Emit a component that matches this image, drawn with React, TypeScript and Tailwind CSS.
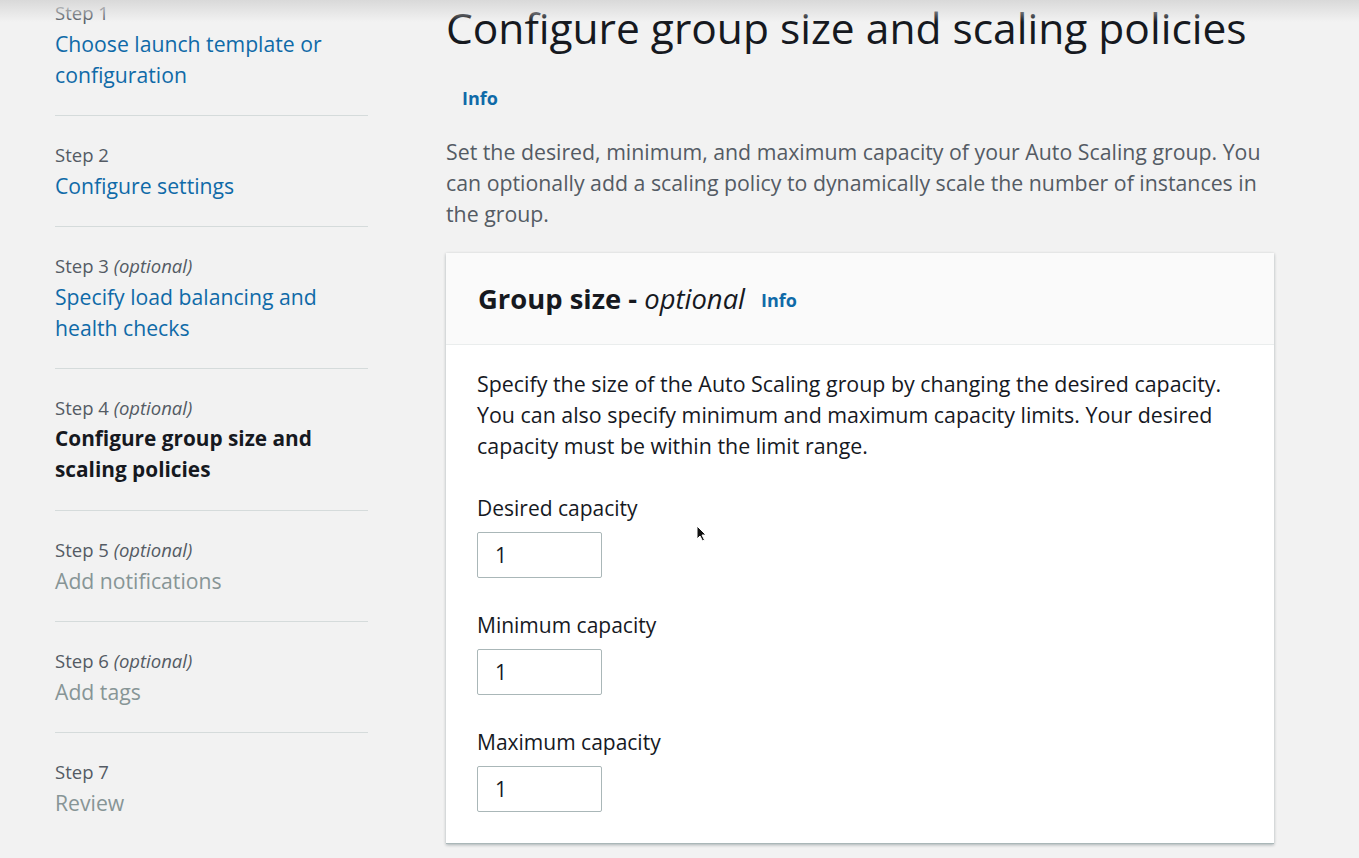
import React from "react";

const font = { fontFamily: '"Open Sans", "Noto Sans", Arial, sans-serif' };

type Step = { n: number; optional?: boolean; title: string; state: "link" | "current" | "disabled" };

const steps: Step[] = [
  { n: 1, title: "Choose launch template or configuration", state: "link" },
  { n: 2, title: "Configure settings", state: "link" },
  { n: 3, optional: true, title: "Specify load balancing and health checks", state: "link" },
  { n: 4, optional: true, title: "Configure group size and scaling policies", state: "current" },
  { n: 5, optional: true, title: "Add notifications", state: "disabled" },
  { n: 6, optional: true, title: "Add tags", state: "disabled" },
  { n: 7, title: "Review", state: "disabled" },
];

function Field({ label }: { label: string }) {
  return (
    <div className="flex flex-col">
      <label className="text-[21px] leading-[30px] text-[#16191f]">{label}</label>
      <input
        defaultValue="1"
        className="mt-[9px] h-[46px] w-[125px] rounded-[2px] border border-[#aab7b8] bg-white px-[17px] text-[21px] text-[#16191f] outline-none"
      />
    </div>
  );
}

export default function App() {
  return (
    <div
      className="relative h-[858px] w-[1359px] overflow-hidden bg-[#f2f2f2] text-[#16191f]"
      style={font}
    >
      <div className="pointer-events-none absolute inset-x-0 top-0 h-[22px] bg-gradient-to-b from-[#d9d9d9] to-transparent" />

      <div className="flex">
        {/* wizard navigation */}
        <nav className="ml-[55px] w-[313px] shrink-0">
          {steps.map((s, i) => (
            <div
              key={s.n}
              className={
                i === 0
                  ? "border-b border-[#d5dbdb] pb-[25px]"
                  : i === steps.length - 1
                  ? "pt-[26px]"
                  : "border-b border-[#d5dbdb] pb-[25px] pt-[26px]"
              }
            >
              <div className="text-[18.5px] leading-[26px] text-[#545b64]">
                Step {s.n}
                {s.optional && <i> (optional)</i>}
              </div>
              <div
                className={
                  s.state === "link"
                    ? "mt-[2px] text-[21.2px] leading-[31px] text-[#0f6aa8]"
                    : s.state === "current"
                    ? "mt-[2px] text-[20.8px] font-bold leading-[31px] text-[#16191f]"
                    : "mt-[2px] text-[21.2px] leading-[31px] text-[#879596]"
                }
              >
                {s.title}
              </div>
            </div>
          ))}
        </nav>

        {/* main content */}
        <main className="ml-[78px] w-[828px] shrink-0">
          <h1 className="mt-[2px] text-[42.5px] leading-[52px] text-[#16191f]">
            Configure group size and scaling policies
          </h1>
          <div className="mt-[31px] pl-[16px] text-[18px] font-bold leading-[26px] text-[#0f6aa8]">Info</div>
          <p className="mt-[25px] text-[21.3px] leading-[31px] text-[#545b64]">
            Set the desired, minimum, and maximum capacity of your Auto Scaling group. You can optionally add a
            scaling policy to dynamically scale the number of instances in the group.
          </p>

          <section className="mt-[24px] border-b border-[#aab7b8] bg-white shadow-[0_1px_3px_rgba(0,28,36,0.3)]">
            <header className="flex h-[92px] items-center border-b border-[#eaeded] bg-[#fafafa] px-[32px]">
              <h2 className="text-[27.4px] font-bold text-[#16191f]">
                Group size - <i className="font-normal">optional</i>
              </h2>
              <span className="ml-[16px] mt-[3px] text-[18px] font-bold text-[#0f6aa8]">Info</span>
            </header>
            <div className="px-[31px] pb-[31px] pt-[23px]">
              <p className="text-[21.4px] leading-[31px] text-[#16191f]">
                Specify the size of the Auto Scaling group by changing the desired capacity. You can also specify
                minimum and maximum capacity limits. Your desired capacity must be within the limit range.
              </p>
              <div className="mt-[32px] flex flex-col gap-[32px]">
                <Field label="Desired capacity" />
                <Field label="Minimum capacity" />
                <Field label="Maximum capacity" />
              </div>
            </div>
          </section>
        </main>
      </div>

      {/* mouse pointer */}
      <svg className="absolute left-[696px] top-[525px]" width="11" height="17" viewBox="0 0 11 17">
        <path d="M1 1 L1 14 L4 11 L6.5 16 L8.5 15 L6 10 L10 10 Z" fill="#111" stroke="#fff" strokeWidth="1" />
      </svg>
    </div>
  );
}
